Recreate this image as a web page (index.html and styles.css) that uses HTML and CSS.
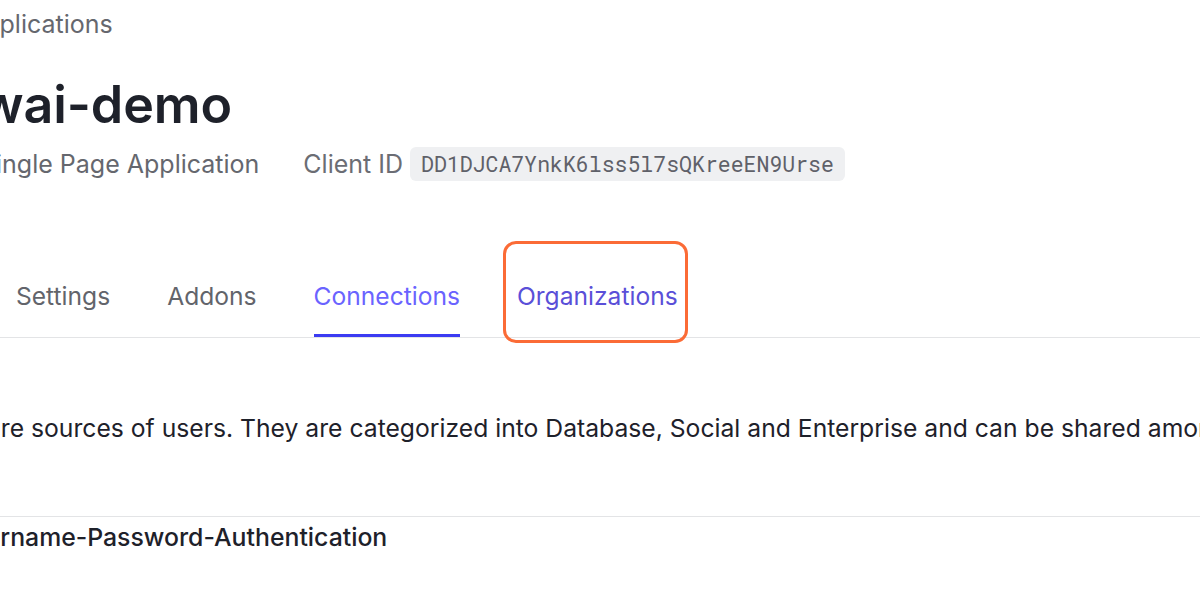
FILE: index.html
```html
<!DOCTYPE html>
<html lang="en">
<head>
<meta charset="utf-8">
<title>wai-demo – Applications</title>
<link rel="stylesheet" href="styles.css">
</head>
<body>
<div class="page">
  <header class="app-header">
    <a class="crumb" href="#">Applications</a>
    <h1 class="title">wai-demo</h1>
    <div class="meta">
      <span class="app-type">Single Page Application</span>
      <span class="client">
        <span class="client-label">Client ID</span>
        <code class="client-id">DD1DJCA7YnkK6lss5l7sQKreeEN9Urse</code>
      </span>
    </div>
  </header>

  <nav class="tabs">
    <ul class="tab-list">
      <li class="tab">Settings</li>
      <li class="tab">Addons</li>
      <li class="tab tab-active">Connections</li>
      <li class="tab tab-hover tab-marked">Organizations</li>
    </ul>
  </nav>

  <section class="intro">
    <p class="intro-text">Connections are sources of users. They are categorized into Database, Social and Enterprise and can be shared among different applications.</p>
  </section>

  <section class="conn-list">
    <div class="conn-row">
      <span class="conn-name">Username-Password-Authentication</span>
    </div>
  </section>
</div>
</body>
</html>
```

FILE: styles.css
```css
html, body {
  margin: 0;
  padding: 0;
  background: #ffffff;
  overflow: hidden;
}

body {
  width: 1200px;
  height: 594px;
  font-family: Inter, "Noto Sans", "Liberation Sans", sans-serif;
  color: #1e212a;
}

.page {
  margin-left: -20px;
  width: 1400px;
}

.app-header {
  padding-top: 8px;
}

.crumb {
  display: block;
  margin-left: -13px;
  font-size: 25px;
  line-height: 32px;
  color: #65676e;
  text-decoration: none;
}

.title {
  margin: 35px 0 0;
  font-size: 52px;
  line-height: 60px;
  font-weight: 600;
  color: #1e212a;
  letter-spacing: -0.1px;
}

.meta {
  margin-top: 12px;
  display: flex;
  align-items: center;
  height: 34px;
  font-size: 25px;
  line-height: 32px;
  color: #65676e;
}

.app-type {
  margin-right: 44px;
}

.client {
  display: flex;
  align-items: center;
  gap: 7px;
}

.client-label {
  color: #6b6d74;
}

.client-id {
  display: inline-block;
  height: 34px;
  line-height: 34px;
  padding: 0 11px;
  border-radius: 6px;
  background: #eff0f2;
  font-family: "Roboto Mono", "DejaVu Sans Mono", "Liberation Mono", monospace;
  font-size: 21.5px;
  color: #5f6169;
}

.tabs {
  margin-top: 99px;
  border-bottom: 1px solid #e3e4e6;
}

.tab-list {
  list-style: none;
  margin: 0;
  padding: 0 0 0 36px;
  display: flex;
  gap: 57px;
}

.tab {
  position: relative;
  font-size: 24.6px;
  line-height: 32px;
  padding-bottom: 22px;
  border-bottom: 3px solid transparent;
  color: #62646b;
}

.tab-active {
  color: #6a63ff;
  border-bottom-color: #3b3bf2;
}

.tab-hover {
  color: #5a4fd8;
}

.tab-marked::after {
  content: "";
  position: absolute;
  left: -14px;
  right: -10px;
  top: -39px;
  bottom: -9px;
  border: 3px solid #fb6b36;
  border-radius: 13px;
}

.intro {
  margin-top: 74px;
  padding-bottom: 72px;
  border-bottom: 1px solid #e3e4e6;
}

.intro-text {
  margin: 0 0 0 -147px;
  font-size: 24.7px;
  line-height: 32px;
  white-space: nowrap;
  color: #1e212a;
}

.conn-row {
  padding-top: 4px;
}

.conn-name {
  display: block;
  margin-left: -26px;
  font-size: 24.8px;
  line-height: 32px;
  font-weight: 500;
  color: #1e212a;
}
```
